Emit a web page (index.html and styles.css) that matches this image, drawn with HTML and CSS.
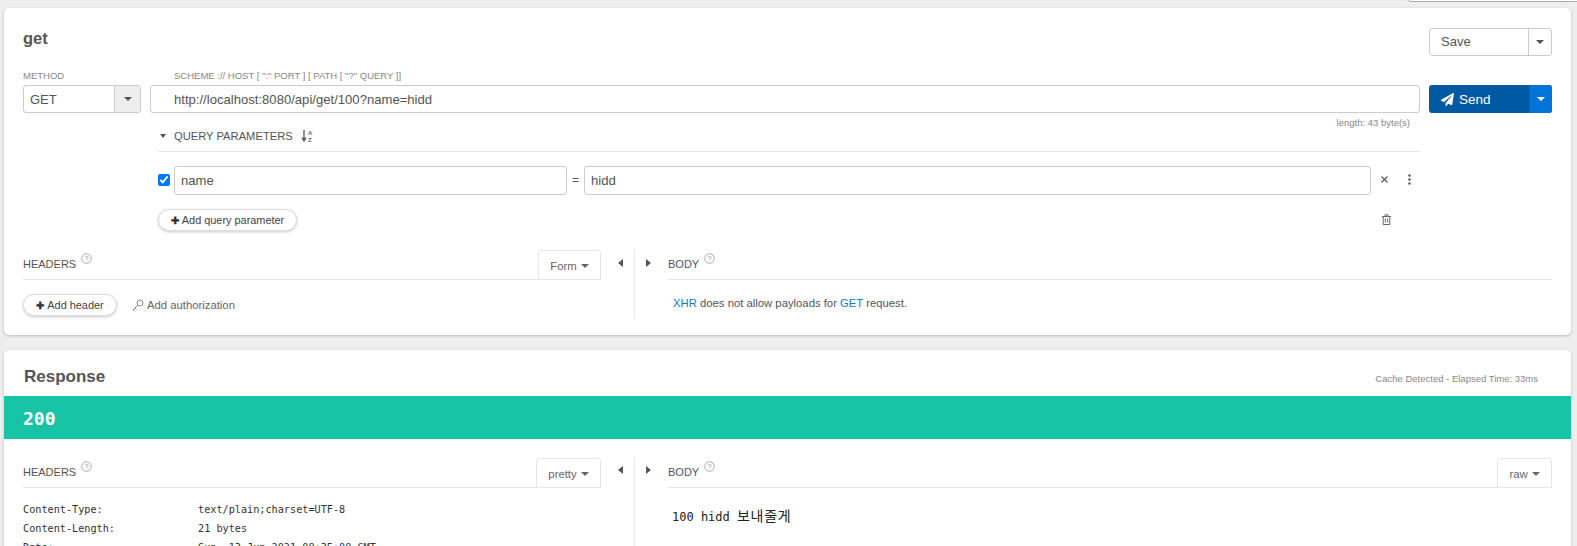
FILE: index.html
```html
<!DOCTYPE html>
<html lang="en">
<head>
<meta charset="utf-8">
<title>get</title>
<link rel="stylesheet" href="styles.css">
</head>
<body>
<div class="top-menu"></div>
<main class="page">
  <section class="card request">
    <header class="title-row">
      <h1 class="title">get</h1>
      <div class="split save">
        <span class="split-main">Save</span>
        <span class="split-caret"><i class="caret"></i></span>
      </div>
    </header>
    <div class="url-grid">
      <div class="label method-label">METHOD</div>
      <div class="label scheme-label">SCHEME :// HOST [ ":" PORT ] [ PATH [ "?" QUERY ]]</div>
      <div></div>
      <div class="split method">
        <span class="split-main">GET</span>
        <span class="split-caret"><i class="caret"></i></span>
      </div>
      <div class="field url">http://localhost:8080/api/get/100?name=hidd</div>
      <div class="split send">
        <span class="split-main">
          <svg class="plane" viewBox="0 0 512 512"><path fill="#fff" d="M476 3L13 270c-18 10-16 35 3 42l106 45L410 103c6-5 13 2 9 8L178 405v81c0 24 29 33 43 15l64-78 125 53c14 6 31-3 33-19L511 28c3-20-18-35-35-25z"/></svg>
          Send
        </span>
        <span class="split-caret"><i class="caret"></i></span>
      </div>
    </div>
    <div class="params">
      <div class="length">length: 43 byte(s)</div>
      <div class="params-head">
        <i class="caret small"></i>
        <span class="params-title">QUERY PARAMETERS</span>
        <svg class="sort" width="12" height="14" viewBox="0 0 12 14">
          <path d="M3 1v10M1 8.500L3 12l2-3.500" fill="none" stroke="#555" stroke-width="1.300"/>
          <text x="7" y="5.500" class="sort-letter">A</text>
          <text x="7" y="13" class="sort-letter">Z</text>
        </svg>
      </div>
      <div class="param-row">
        <input class="check" type="checkbox" checked>
        <div class="field param-name">name</div>
        <span class="eq">=</span>
        <div class="field param-value">hidd</div>
        <svg class="row-icon close" width="7" height="7" viewBox="0 0 7 7"><path d="M.5.500l6 6M6.500.500l-6 6" stroke="#555" stroke-width="1.100" fill="none"/></svg>
        <svg class="row-icon dots" width="3" height="11" viewBox="0 0 3 11"><circle cx="1.500" cy="1.500" r="1.200" fill="#555"/><circle cx="1.500" cy="5.500" r="1.200" fill="#555"/><circle cx="1.500" cy="9.500" r="1.200" fill="#555"/></svg>
      </div>
      <div class="param-actions">
        <button class="pill pill-param"><b class="plus">✚</b> Add query parameter</button>
        <svg class="trash" width="9" height="11" viewBox="0 0 9 11"><path d="M0 2.500h9M3 2.500V.8h3v1.700M1.200 2.500v8h6.600v-8M3.300 4.500v4M5.700 4.500v4" fill="none" stroke="#666" stroke-width="1"/></svg>
      </div>
    </div>
    <div class="panes">
      <div class="pane pane-left">
        <div class="pane-head">
          <span class="pane-title">HEADERS</span>
          <svg class="help" width="11" height="11" viewBox="0 0 11 11"><circle cx="5.500" cy="5.500" r="4.800" fill="none" stroke="#aaa"/><text x="5.500" y="8.200" class="help-mark">?</text></svg>
          <span class="tab tab-form">Form <i class="caret"></i></span>
        </div>
        <div class="pane-actions">
          <button class="pill pill-header"><b class="plus">✚</b> Add header</button>
          <svg class="key" width="12" height="13" viewBox="0 0 12 13"><circle cx="8" cy="4" r="3" fill="none" stroke="#888"/><path d="M5.800 6.200L1 11l1.500 1.200M3 9l1.200 1.200" fill="none" stroke="#888"/></svg>
          <span class="auth">Add authorization</span>
        </div>
      </div>
      <div class="gutter">
        <i class="arrow arrow-left"></i>
        <span class="gutter-line"></span>
        <i class="arrow arrow-right"></i>
      </div>
      <div class="pane pane-right">
        <div class="pane-head">
          <span class="pane-title">BODY</span>
          <svg class="help" width="11" height="11" viewBox="0 0 11 11"><circle cx="5.500" cy="5.500" r="4.800" fill="none" stroke="#aaa"/><text x="5.500" y="8.200" class="help-mark">?</text></svg>
        </div>
        <p class="xhr"><span class="link">XHR</span> does not allow payloads for <span class="link">GET</span> request.</p>
      </div>
    </div>
  </section>

  <section class="card response">
    <header class="response-head">
      <h2 class="response-title">Response</h2>
      <span class="elapsed">Cache Detected - Elapsed Time: 33ms</span>
    </header>
    <div class="status">200</div>
    <div class="panes panes-response">
      <div class="pane pane-left">
        <div class="pane-head">
          <span class="pane-title">HEADERS</span>
          <svg class="help" width="11" height="11" viewBox="0 0 11 11"><circle cx="5.500" cy="5.500" r="4.800" fill="none" stroke="#aaa"/><text x="5.500" y="8.200" class="help-mark">?</text></svg>
          <span class="tab tab-pretty">pretty <i class="caret"></i></span>
        </div>
        <dl class="header-list">
          <dt>Content-Type:</dt><dd>text/plain;charset=UTF-8</dd>
          <dt>Content-Length:</dt><dd>21 bytes</dd>
          <dt>Date:</dt><dd>Sun, 13 Jun 2021 08:35:00 GMT</dd>
        </dl>
      </div>
      <div class="gutter">
        <i class="arrow arrow-left"></i>
        <span class="gutter-line"></span>
        <i class="arrow arrow-right"></i>
      </div>
      <div class="pane pane-right">
        <div class="pane-head">
          <span class="pane-title">BODY</span>
          <svg class="help" width="11" height="11" viewBox="0 0 11 11"><circle cx="5.500" cy="5.500" r="4.800" fill="none" stroke="#aaa"/><text x="5.500" y="8.200" class="help-mark">?</text></svg>
          <span class="tab tab-raw">raw <i class="caret"></i></span>
        </div>
        <pre class="body-text">100 hidd <span class="ko">보내줄게</span></pre>
      </div>
    </div>
  </section>
</main>
</body>
</html>
```
FILE: styles.css
```css
* { box-sizing: border-box; }
html, body { height: 546px; overflow: hidden; }
body {
  margin: 0;
  background: #eee;
  color: #555;
  font-family: "Liberation Sans", Arial, sans-serif;
  font-size: 12px;
  position: relative;
}
.top-menu {
  position: absolute;
  top: -10px;
  right: -4px;
  width: 174px;
  height: 12px;
  background: #fff;
  border: 1px solid #aaa;
  border-radius: 4px;
}
.page {
  padding: 8px 6px 0 4px;
  display: flex;
  flex-direction: column;
  gap: 15px;
}
.card {
  background: #fff;
  border-radius: 5px;
  box-shadow: 0 1px 3px rgba(0,0,0,.22);
}
.request { height: 327px; padding: 20px 19px 0; }
.title-row { display: flex; justify-content: space-between; height: 57px; }
.title { margin: 0; font-size: 16.500px; line-height: 20px; font-weight: 700; color: #555; }
.split {
  display: flex;
  width: 123px;
  height: 28px;
  border: 1px solid #ccc;
  border-radius: 3px;
  font-size: 13px;
  align-items: stretch;
}
.split-main { flex: 1; display: flex; align-items: center; padding-left: 11px; }
.split-caret { display: flex; align-items: center; justify-content: center; width: 23px; border-left: 1px solid #ccc; }
.caret {
  display: inline-block;
  width: 0;
  height: 0;
  border-left: 4px solid transparent;
  border-right: 4px solid transparent;
  border-top: 4px solid #555;
}
.caret.small { margin-left: 2px; border-left-width: 3.500px; border-right-width: 3.500px; }
.save .split-main { padding-bottom: 2px; }
.url-grid {
  display: grid;
  grid-template-columns: 118px 1270px 123px;
  grid-template-rows: 14px 28px;
  column-gap: 9px;
  margin-top: -14px;
  width: 1530px;
}
.label { font-size: 9.500px; line-height: 14px; color: #888; margin-top: -2px; }
.scheme-label { padding-left: 24px; }
.method { width: 118px; }
.method .split-main { padding-left: 6px; }
.method .split-caret { width: 26px; background: #eee; }
.field {
  border: 1px solid #ccc;
  border-radius: 3px;
  background: #fff;
  display: flex;
  align-items: center;
  font-size: 13.100px;
  color: #555;
}
.url { padding-left: 23px; }
.send { background: #0059a3; border: 0; color: #fff; font-size: 13.500px; }
.send .split-main { gap: 5px; padding-left: 12px; }
.send .split-caret { width: 23px; background: #0074d9; border-left: 1px solid #0a66b8; border-radius: 0 3px 3px 0; }
.send .caret { border-top-color: #fff; }
.plane { width: 13px; height: 13px; }
.params { margin-left: 135px; width: 1262px; position: relative; }
.length { position: absolute; top: 4px; right: 10px; font-size: 9.500px; line-height: 12px; color: #888; }
.params-head {
  height: 39px;
  padding-top: 8px;
  display: flex;
  align-items: center;
  border-bottom: 1px solid #e6e6e6;
}
.params-title { margin-left: 8px; font-size: 11.200px; color: #555; }
.sort { margin-left: 8px; }
.sort-letter { font-size: 6px; font-weight: 700; fill: #666; font-family: "Liberation Sans", sans-serif; }
.param-row { display: flex; align-items: center; margin-top: 13px; height: 30px; }
.check { margin: 0; width: 12px; height: 12px; }
.param-name { width: 393px; height: 29px; margin-left: 4px; padding-left: 6px; }
.eq { width: 17px; text-align: center; font-size: 12px; }
.param-value { width: 787px; height: 29px; padding-left: 6px; }
.row-icon { margin-top: -2px; }
.close { margin-left: 10px; }
.dots { margin-left: 20px; }
.param-actions { display: flex; align-items: center; justify-content: space-between; margin-top: 14px; height: 22px; padding-right: 29px; }
.trash { margin-top: -2px; }
.pill {
  height: 22px;
  background: #fff;
  border: 1px solid #ddd;
  border-radius: 11px;
  box-shadow: 0 1px 3px rgba(0,0,0,.2);
  font: 10.900px "Liberation Sans", Arial, sans-serif;
  color: #444;
  padding: 0;
  display: inline-flex;
  align-items: center;
  justify-content: center;
  gap: 3px;
}
.pill-param { width: 139px; }
.pill-header { width: 94px; }
.plus { font-size: 10px; color: #333; }
.panes { display: flex; margin-top: 19px; width: 1530px; }
.pane-left { width: 578px; }
.pane-right { width: 884px; }
.pane-head {
  height: 30px;
  border-bottom: 1px solid #e6e6e6;
  display: flex;
  align-items: center;
  position: relative;
}
.pane-title { font-size: 11px; color: #555; margin-top: -2px; }
.help { margin: -12px 0 0 5px; }
.help-mark { font-size: 8px; fill: #999; text-anchor: middle; font-family: "Liberation Sans", sans-serif; }
.tab {
  margin-left: auto;
  height: 30px;
  margin-bottom: -1px;
  padding-top: 1px;
  display: flex;
  align-items: center;
  justify-content: center;
  gap: 4px;
  border: 1px solid #e6e6e6;
  border-radius: 3px 3px 0 0;
  font-size: 11.300px;
  color: #666;
}
.tab .caret { border-top-color: #666; }
.tab-form { width: 63px; }
.tab-pretty { width: 65px; }
.tab-raw { width: 55px; }
.gutter { width: 67px; height: 68px; display: flex; align-items: flex-start; justify-content: center; }
.gutter-line { width: 1px; height: 100%; background: #e6e6e6; margin: 0 11px; }
.arrow {
  margin-top: 9px;
  width: 0;
  height: 0;
  border-top: 4px solid transparent;
  border-bottom: 4px solid transparent;
}
.arrow-left { border-right: 5px solid #555; }
.arrow-right { border-left: 5px solid #555; }
.pane-actions { display: flex; align-items: center; margin-top: 14px; }
.key { margin-left: 15px; }
.auth { margin-left: 3px; font-size: 11.300px; color: #666; }
.xhr { margin: 17px 0 0 5px; font-size: 11.300px; color: #555; }
.link { color: #0f7dc2; }
.response { height: 210px; overflow: hidden; }
.response-head { height: 46px; display: flex; justify-content: space-between; align-items: center; padding: 0 33px 0 20px; }
.response-title { margin: 8px 0 0; font-size: 17px; font-weight: 700; color: #555; }
.elapsed { margin-top: 10px; font-size: 9.500px; color: #888; }
.status {
  height: 43px;
  background: #17c4a5;
  color: #fff;
  font: 700 18px/45px "DejaVu Sans Mono", monospace;
  padding-left: 19px;
}
.panes-response { margin: 19px 0 0 19px; }
.panes-response .arrow { margin-top: 8px; }
.panes-response .gutter { height: 100px; }
.header-list {
  margin: 16px 0 0;
  display: grid;
  grid-template-columns: 175px 1fr;
  row-gap: 7px;
  font: 10.200px/12px "DejaVu Sans Mono", monospace;
  color: #333;
}
.header-list dd { margin: 0; }
.body-text {
  margin: 19px 0 0 4px;
  font: 12px/16px "DejaVu Sans Mono", "Noto Sans CJK KR", monospace;
  color: #222;
}
.ko { font: 14px/16px "Noto Sans CJK KR", sans-serif; letter-spacing: .7px; }
```
